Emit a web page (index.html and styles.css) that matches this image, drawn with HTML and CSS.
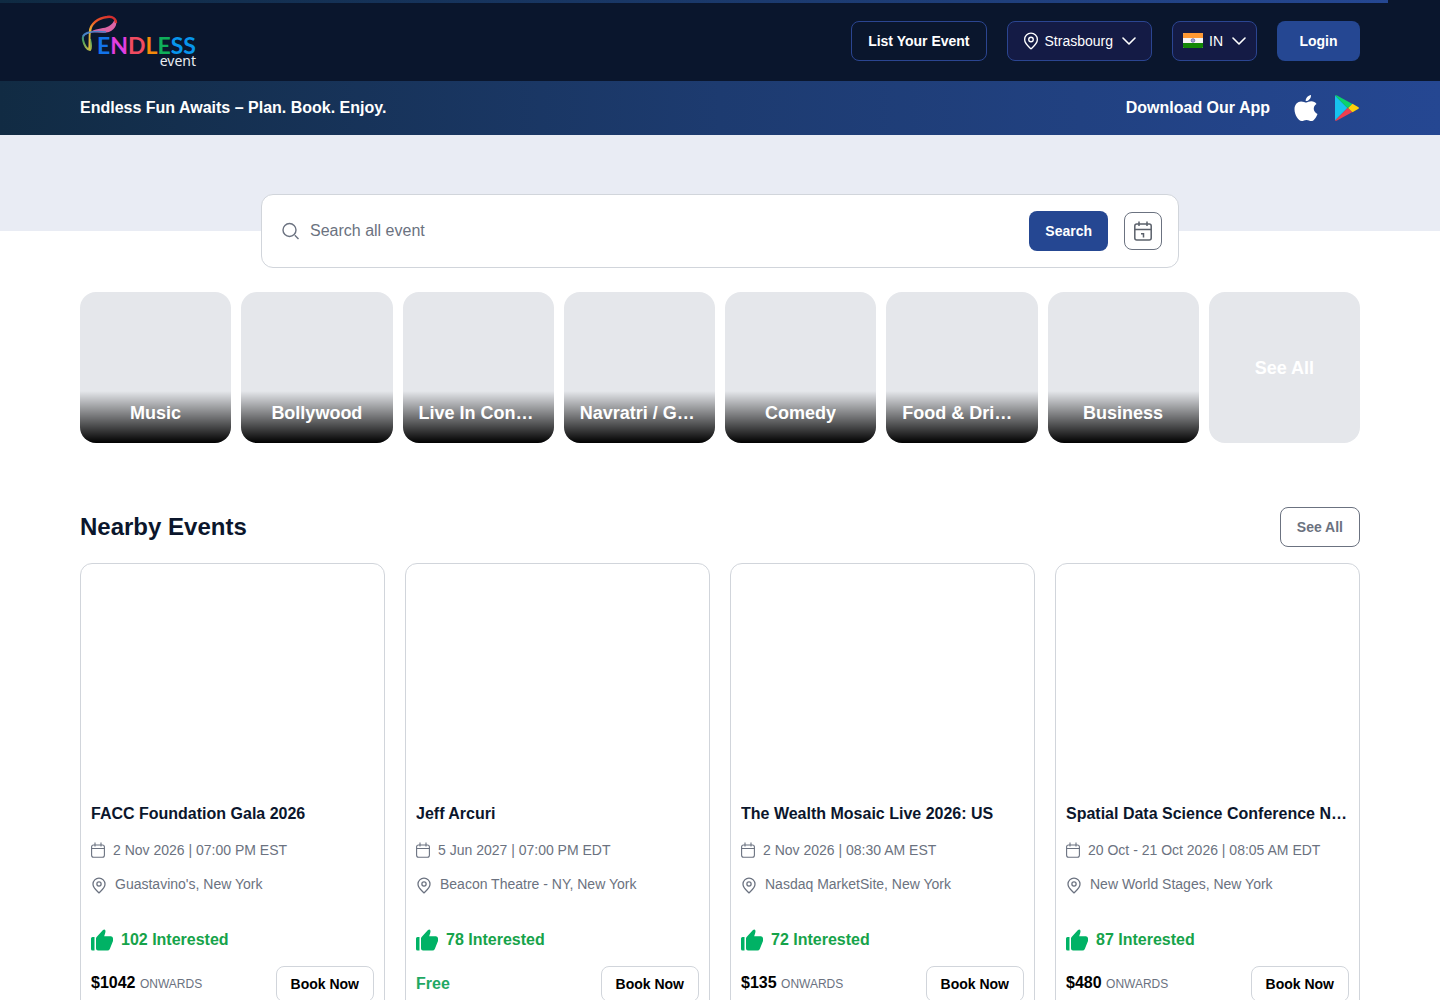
FILE: index.html
```html
<!DOCTYPE html>
<html lang="en">
<head>
  <meta charset="UTF-8" />
  <title>Endless Event</title>
  <meta name="viewport" content="width=device-width, initial-scale=1.0"/>
  <link rel="stylesheet" href="styles.css">
</head>
<body>
  <!-- Shared icons -->
  <svg class="icon-defs" xmlns="http://www.w3.org/2000/svg" aria-hidden="true">
    <symbol id="icon-pin" viewBox="2 0 20 24">
      <path d="M12 22.5C9.200 19.800 3.500 15.600 3.500 10A8.500 8.500 0 0 1 20.500 10C20.500 15.600 14.800 19.800 12 22.500Z" fill="none" stroke="currentColor" stroke-width="1.8" stroke-linejoin="round"/>
      <circle cx="12" cy="10" r="3" fill="none" stroke="currentColor" stroke-width="1.8"/>
    </symbol>
    <symbol id="icon-chevron" viewBox="0 0 14 8">
      <path d="M1 1l6 6 6-6" fill="none" stroke="currentColor" stroke-width="1.6" stroke-linecap="round" stroke-linejoin="round"/>
    </symbol>
    <symbol id="icon-calendar" viewBox="0 0 14 16">
      <rect x="0.600" y="3" width="12.800" height="12.200" rx="2" fill="none" stroke="currentColor" stroke-width="1.100"/>
      <path d="M0.600 6.500h12.800M4 0.500v4M10 0.500v4" fill="none" stroke="currentColor" stroke-width="1.100"/>
    </symbol>
    <symbol id="icon-thumb" viewBox="0 0 22 22">
      <path d="M0 9.500Q0 8 1.500 8H3.500V21.500H1.500Q0 21.500 0 20ZM5 9.500Q5 8.500 5.600 7.900L12 1Q13.600-.3 14.400 1.400C14.800 3 13.700 5.300 13.200 7.300H20Q22 7.500 22 9.500V12L18.800 20Q18.100 21.500 16.500 21.500H7Q5 21.500 5 19.500Z" fill="#00b265"/>
    </symbol>
  </svg>

  <div class="progress"></div>

  <!-- Header -->
  <header class="header">
    <div class="container header-row">
      <a class="logo" href="#" aria-label="Endless event">
        <svg width="116" height="54" viewBox="0 0 116 54">
          <defs>
            <linearGradient id="ribbonTop" x1="0" y1="1" x2="1" y2="0">
              <stop offset="0" stop-color="#e8c33a"/>
              <stop offset="0.400" stop-color="#ee5d25"/>
              <stop offset="1" stop-color="#cf2530"/>
            </linearGradient>
            <linearGradient id="ribbonTail" x1="0" y1="0" x2="0" y2="1">
              <stop offset="0" stop-color="#2e70b8"/>
              <stop offset="0.500" stop-color="#4ba05b"/>
              <stop offset="1" stop-color="#b6b94a"/>
            </linearGradient>
          </defs>
          <path d="M35 4C38 9 36 15 29 18C22 20 15 17 9 19C15 14 22 15 27 13C32 11 34 8 35 4Z" fill="#dc65a5"/>
          <path d="M10 18C10 10 18 4 27 3C33 2 36 5 36 9" fill="none" stroke="url(#ribbonTop)" stroke-width="2.400"/>
          <path d="M11 18C5 19 2 21 3 26C4 31 7 36 10 36C12 33 11 29 10 25" fill="none" stroke="url(#ribbonTail)" stroke-width="2"/>
          <path d="M10 17C9 24 10 30 9 35" fill="none" stroke="#d9b63e" stroke-width="1.800"/>
          <path d="M3 22Q8 16 26 18" fill="none" stroke="#4c7fc7" stroke-width="1.500"/>
          <text class="logo-name" x="17" y="40"><tspan fill="#1273ea">E</tspan><tspan fill="#e13ee0">N</tspan><tspan fill="#f04b61">D</tspan><tspan fill="#f58a0b">L</tspan><tspan fill="#0fae5a">E</tspan><tspan fill="#0795ec">SS</tspan></text>
          <text class="logo-sub" x="116" y="52" text-anchor="end">event</text>
        </svg>
      </a>
      <nav class="header-nav">
        <a class="btn btn-outline" href="#">List Your Event</a>
        <button class="btn btn-picker" type="button" aria-haspopup="listbox">
          <svg width="16" height="18"><use href="#icon-pin"/></svg>
          <span>Strasbourg</span>
          <svg class="chevron" width="14" height="8"><use href="#icon-chevron"/></svg>
        </button>
        <button class="btn btn-picker btn-country" type="button" aria-haspopup="listbox">
          <svg width="20" height="15" viewBox="0 0 20 15">
            <rect width="20" height="15" rx="1" fill="#f4f4f4"/>
            <path d="M0 1Q0 0 1 0H19Q20 0 20 1V5H0Z" fill="#ff9933"/>
            <path d="M0 10H20V14Q20 15 19 15H1Q0 15 0 14Z" fill="#128807"/>
            <circle cx="10" cy="7.500" r="1.800" fill="#a9a9d2" stroke="#5656a0" stroke-width="0.700"/>
          </svg>
          <span>IN</span>
          <svg class="chevron" width="14" height="8"><use href="#icon-chevron"/></svg>
        </button>
        <button class="btn btn-primary btn-login" type="button">Login</button>
      </nav>
    </div>
  </header>

  <!-- App banner -->
  <div class="promo">
    <div class="container promo-row">
      <span>Endless Fun Awaits – Plan. Book. Enjoy.</span>
      <div class="promo-apps">
        <span>Download Our App</span>
        <a href="#" aria-label="App Store">
          <svg width="24" height="28" viewBox="0 0 24 28">
            <path d="M17 1C17.200 4.500 14.500 7.300 11.700 7.100C11.500 4 14.200 1.300 17 1ZM12.300 8.500C13.500 8.500 15 7.300 17.300 7.300C19.500 7.300 21.400 8.400 22.500 10C18.500 12.300 18.900 18 23.500 19.900C22.500 22.700 20.200 27 17.300 27C15.400 27 14.700 25.900 12.500 25.900C10.300 25.900 9.500 27 7.700 27C4.500 27 .5 21 .5 15.300C.5 10.200 3.700 7.400 7.100 7.400C9.300 7.400 11.200 8.500 12.300 8.500Z" fill="#fff"/>
          </svg>
        </a>
        <a href="#" aria-label="Google Play">
          <svg width="26" height="28" viewBox="0 0 26 28">
            <path d="M1 1.500L13.500 14L1 26.500Z" fill="#17c3ee"/>
            <path d="M1 1.500Q1.800.8 3 1.500L18.500 10L13.500 14Z" fill="#0bd26c"/>
            <path d="M1 26.500Q1.800 27.200 3 26.500L18.500 18L13.500 14Z" fill="#ee3f4f"/>
            <path d="M18.500 9.800L24.500 13.200Q25.500 14 24.500 14.800L18.500 18.200L14 14Z" fill="#fdd00a"/>
          </svg>
        </a>
      </div>
    </div>
  </div>

  <div class="hero"></div>

  <main class="container">
    <!-- Search -->
    <form class="search">
      <label class="search-label" for="search" aria-label="Search all event">
        <svg width="18" height="18" viewBox="0 0 18 18" fill="none" stroke="#6b7280" stroke-width="1.400">
          <circle cx="7.500" cy="8" r="6.500"/>
          <path d="M12.800 13.300L16.500 17"/>
        </svg>
      </label>
      <input class="search-input" id="search" type="text" placeholder="Search all event">
      <button class="btn btn-primary" type="submit">Search</button>
      <button class="date-btn" type="button" aria-label="Pick a date">
        <svg width="18" height="20" viewBox="0 0 18 20" fill="none" stroke="#5b616b" stroke-width="1.500">
          <rect x="0.800" y="3" width="16.400" height="16" rx="2"/>
          <path d="M1 8.500H17M5 0.500V5M13 0.500V5"/>
          <path d="M7 12.800H9.500V16.500"/>
        </svg>
      </button>
    </form>

    <!-- Categories -->
    <div class="categories">
      <a class="category" href="#"><span class="category-name"><span>Music</span></span></a>
      <a class="category" href="#"><span class="category-name"><span>Bollywood</span></span></a>
      <a class="category" href="#"><span class="category-name"><span>Live In Concert</span></span></a>
      <a class="category" href="#"><span class="category-name"><span>Navratri / Garba</span></span></a>
      <a class="category" href="#"><span class="category-name"><span>Comedy</span></span></a>
      <a class="category" href="#"><span class="category-name"><span>Food &amp; Drinks</span></span></a>
      <a class="category" href="#"><span class="category-name"><span>Business</span></span></a>
      <a class="category category-all" href="#">See All</a>
    </div>

    <!-- Nearby events -->
    <div class="section-head">
      <h2>Nearby Events</h2>
      <a class="btn btn-see-all" href="#">See All</a>
    </div>

    <div class="events">
      <article class="event-card">
        <div class="event-image"></div>
        <div class="event-body">
          <h3>FACC Foundation Gala 2026</h3>
          <p class="event-date"><svg width="14" height="16"><use href="#icon-calendar"/></svg>2 Nov 2026 | 07:00 PM EST</p>
          <p class="event-place"><svg width="16" height="17"><use href="#icon-pin"/></svg>Guastavino's, New York</p>
          <p class="event-interest"><svg width="22" height="22"><use href="#icon-thumb"/></svg>102 Interested</p>
          <div class="event-foot">
            <p class="price">$1042 <small>ONWARDS</small></p>
            <button class="btn btn-book" type="button">Book Now</button>
          </div>
        </div>
      </article>
      <article class="event-card">
        <div class="event-image"></div>
        <div class="event-body">
          <h3>Jeff Arcuri</h3>
          <p class="event-date"><svg width="14" height="16"><use href="#icon-calendar"/></svg>5 Jun 2027 | 07:00 PM EDT</p>
          <p class="event-place"><svg width="16" height="17"><use href="#icon-pin"/></svg>Beacon Theatre - NY, New York</p>
          <p class="event-interest"><svg width="22" height="22"><use href="#icon-thumb"/></svg>78 Interested</p>
          <div class="event-foot">
            <p class="price price-free">Free</p>
            <button class="btn btn-book" type="button">Book Now</button>
          </div>
        </div>
      </article>
      <article class="event-card">
        <div class="event-image"></div>
        <div class="event-body">
          <h3>The Wealth Mosaic Live 2026: US</h3>
          <p class="event-date"><svg width="14" height="16"><use href="#icon-calendar"/></svg>2 Nov 2026 | 08:30 AM EST</p>
          <p class="event-place"><svg width="16" height="17"><use href="#icon-pin"/></svg>Nasdaq MarketSite, New York</p>
          <p class="event-interest"><svg width="22" height="22"><use href="#icon-thumb"/></svg>72 Interested</p>
          <div class="event-foot">
            <p class="price">$135 <small>ONWARDS</small></p>
            <button class="btn btn-book" type="button">Book Now</button>
          </div>
        </div>
      </article>
      <article class="event-card">
        <div class="event-image"></div>
        <div class="event-body">
          <h3>Spatial Data Science Conference New York 2026</h3>
          <p class="event-date"><svg width="14" height="16"><use href="#icon-calendar"/></svg>20 Oct - 21 Oct 2026 | 08:05 AM EDT</p>
          <p class="event-place"><svg width="16" height="17"><use href="#icon-pin"/></svg>New World Stages, New York</p>
          <p class="event-interest"><svg width="22" height="22"><use href="#icon-thumb"/></svg>87 Interested</p>
          <div class="event-foot">
            <p class="price">$480 <small>ONWARDS</small></p>
            <button class="btn btn-book" type="button">Book Now</button>
          </div>
        </div>
      </article>
    </div>
  </main>
</body>
</html>
```
FILE: styles.css
```css
* {
  box-sizing: border-box;
}
body {
  margin: 0;
  font-family: "Liberation Sans", Arial, sans-serif;
  font-size: 16px;
  line-height: 24px;
  color: #0b162c;
  background: #fff;
}
h2, h3, p {
  margin: 0;
}
a {
  color: inherit;
  text-decoration: none;
}
svg {
  display: block;
  flex-shrink: 0;
}
.icon-defs {
  position: absolute;
  width: 0;
  height: 0;
}
.container {
  max-width: 1440px;
  margin: 0 auto;
  padding: 0 80px;
}

/* Loading bar over the header */
.progress {
  position: fixed;
  top: 0;
  left: 0;
  z-index: 10;
  width: 96.4%;
  height: 3px;
  background: linear-gradient(90deg, #0f2a42, #254792);
}

/* Buttons */
.btn {
  display: inline-flex;
  align-items: center;
  justify-content: center;
  height: 40px;
  padding: 0 16px;
  border: 1px solid transparent;
  border-radius: 8px;
  background: none;
  color: inherit;
  font-family: inherit;
  font-size: 14px;
  font-weight: bold;
  line-height: 20px;
  white-space: nowrap;
  cursor: pointer;
}
.btn-primary {
  background: #254792;
  color: #fff;
  padding: 0 15px;
}
.btn-outline {
  border-color: #2b4591;
}
.btn-picker {
  gap: 6px;
  padding: 0 15px;
  border-color: #2b4591;
  background: #141b45;
  font-weight: normal;
}
.btn-country {
  padding: 0 10px;
}
.btn-login {
  min-width: 83px;
}
.chevron {
  margin-left: 3px;
}

/* Header */
.header {
  background: #0a162d;
  color: #fff;
}
.header-row {
  display: flex;
  align-items: center;
  justify-content: space-between;
  height: 81px;
}
.header-nav {
  display: flex;
  gap: 20px;
}
.logo svg {
  overflow: visible;
}
.logo-name {
  font-family: Lato, sans-serif;
  font-size: 23px;
  font-weight: bold;
}
.logo-sub {
  font-family: "Noto Sans", sans-serif;
  font-size: 14px;
  fill: #e8ebf0;
}

/* App banner */
.promo {
  background: linear-gradient(90deg, #112b43, #1d3b70 50%, #254792);
  color: #fff;
  font-weight: bold;
}
.promo-row {
  display: flex;
  align-items: center;
  justify-content: space-between;
  height: 54px;
}
.promo-apps {
  display: flex;
  align-items: center;
  gap: 16px;
}
.promo-apps span {
  margin-right: 8px;
}
.hero {
  height: 96px;
  background: #e9ecf4;
}

/* Search */
.search {
  position: relative;
  display: flex;
  align-items: center;
  gap: 16px;
  max-width: 918px;
  margin: -37px auto 24px;
  padding: 16px;
  border: 1px solid #d1d5db;
  border-radius: 12px;
  background: #fff;
}
.search-label {
  padding-left: 4px;
  margin-right: -6px;
}
.search-input {
  flex: 1;
  min-width: 0;
  height: 40px;
  padding: 0;
  border: 0;
  outline: none;
  background: none;
  font-family: inherit;
  font-size: 16px;
  color: #0b162c;
}
.search-input::placeholder {
  color: #6b7280;
}
.date-btn {
  display: flex;
  align-items: center;
  justify-content: center;
  width: 38px;
  height: 38px;
  padding: 0;
  border: 1px solid #6b7280;
  border-radius: 8px;
  background: #fff;
  cursor: pointer;
}

/* Categories */
.categories {
  display: grid;
  grid-template-columns: repeat(8, minmax(0, 1fr));
  gap: 10px;
  margin-bottom: 64px;
}
.category {
  display: flex;
  align-items: flex-end;
  aspect-ratio: 1;
  border-radius: 16px;
  overflow: hidden;
  background: #e5e7eb;
  color: #fff;
  font-size: 18px;
  font-weight: bold;
}
.category-name {
  display: flex;
  justify-content: center;
  width: 100%;
  padding: 8px 16px 16px;
  background: linear-gradient(to top, #000, transparent);
  line-height: 28px;
}
.category-name span {
  overflow: hidden;
  text-overflow: ellipsis;
  white-space: nowrap;
}
.category-all {
  align-items: center;
  justify-content: center;
}

/* Nearby events */
.section-head {
  display: flex;
  align-items: center;
  justify-content: space-between;
  margin-bottom: 16px;
}
.section-head h2 {
  font-size: 24px;
  line-height: 32px;
}
.btn-see-all {
  border-color: #6b7280;
  color: #6b7280;
}
.events {
  display: grid;
  grid-template-columns: repeat(4, minmax(0, 1fr));
  gap: 20px;
  margin-bottom: 40px;
}
.event-card {
  border: 1px solid #d1d5db;
  border-radius: 12px;
  overflow: hidden;
}
.event-image {
  aspect-ratio: 4 / 3;
}
.event-body {
  padding: 10px;
}
.event-body h3 {
  margin-bottom: 14px;
  overflow: hidden;
  font-size: 16px;
  text-overflow: ellipsis;
  white-space: nowrap;
}
.event-date,
.event-place {
  display: flex;
  align-items: center;
  gap: 8px;
  margin-bottom: 14px;
  color: #6b7280;
  font-size: 14px;
  line-height: 20px;
}
.event-place {
  align-items: flex-end;
  margin-bottom: 34px;
}
.event-interest {
  display: flex;
  align-items: center;
  gap: 8px;
  margin-bottom: 14px;
  color: #16a34a;
  font-weight: bold;
}
.event-foot {
  display: flex;
  align-items: center;
  justify-content: space-between;
}
.price {
  color: #000;
  font-weight: bold;
}
.price small {
  color: #6b7280;
  font-size: 12px;
  font-weight: normal;
}
.price-free {
  color: #1fa863;
}
.btn-book {
  height: 36px;
  padding: 0 14px;
  border-color: #d1d5db;
  color: #000;
}
```
